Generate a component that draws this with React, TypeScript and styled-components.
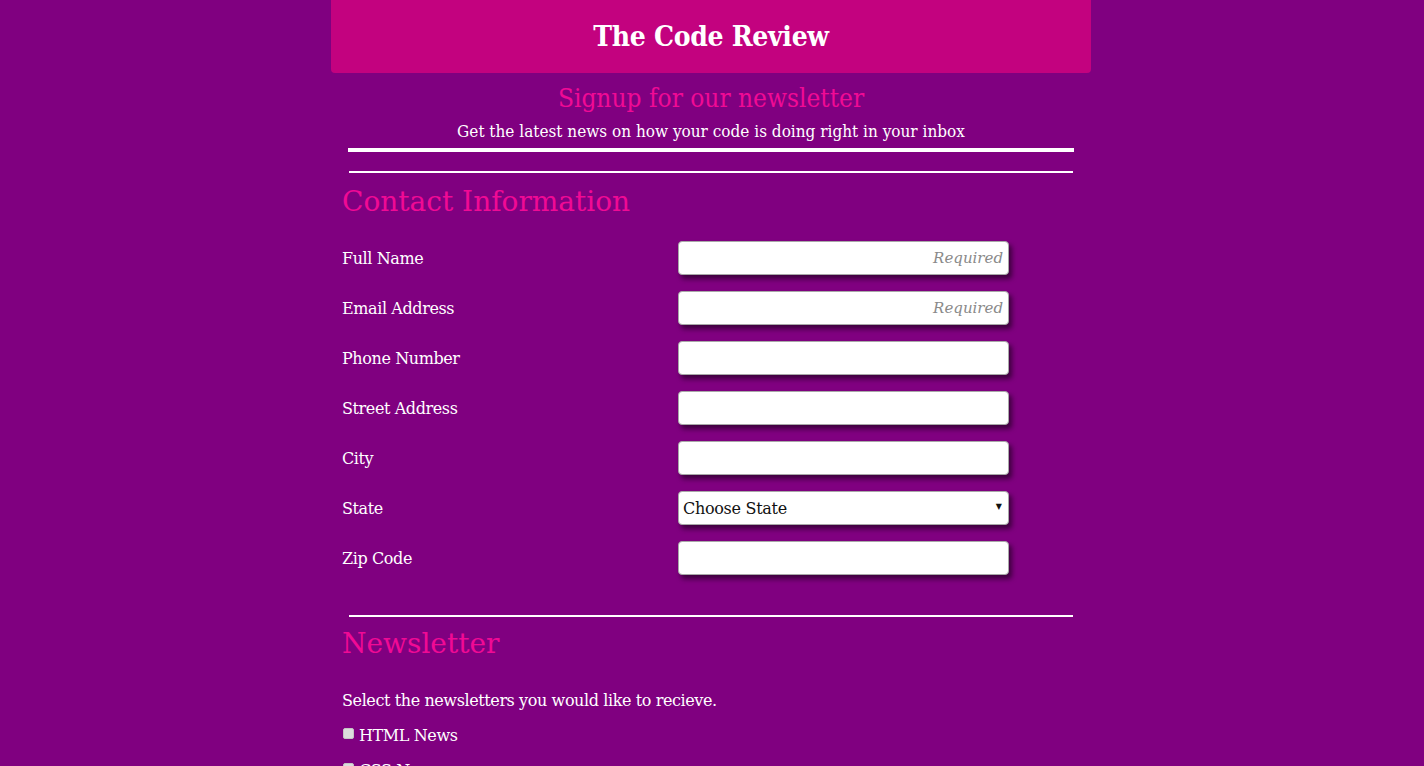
import React from 'react';
import styled, { createGlobalStyle } from 'styled-components';

const GlobalStyle = createGlobalStyle`
  body {
    margin: 0;
    background: #800080;
    font-family: 'DejaVu Serif', 'Liberation Serif', serif;
    color: #ffffff;
  }
`;

const fields = [
  { label: 'Full Name', required: true },
  { label: 'Email Address', required: true },
  { label: 'Phone Number' },
  { label: 'Street Address' },
  { label: 'City' },
  { label: 'State', select: true },
  { label: 'Zip Code' },
];

const App = () => {
  return (
    <>
      <GlobalStyle />
      <Page>
        <Header>
          <Title>The Code Review</Title>
        </Header>
        <Intro>
          <Signup>Signup for our newsletter</Signup>
          <Tagline>Get the latest news on how your code is doing right in your inbox</Tagline>
        </Intro>
        <ThickRule />
        <Rule />
        <Section>
          <SectionTitle>Contact Information</SectionTitle>
          <FormGrid>
            {fields.map((f) => (
              <React.Fragment key={f.label}>
                <Label>{f.label}</Label>
                {f.select ? (
                  <SelectWrap>
                    <Select defaultValue="">
                      <option value="">Choose State</option>
                    </Select>
                    <Arrow>▼</Arrow>
                  </SelectWrap>
                ) : (
                  <Input placeholder={f.required ? 'Required' : ''} />
                )}
              </React.Fragment>
            ))}
          </FormGrid>
        </Section>
        <Rule />
        <Section>
          <SectionTitle $top={8}>Newsletter</SectionTitle>
          <Prompt>Select the newsletters you would like to recieve.</Prompt>
          <CheckRow>
            <Check type="checkbox" />
            HTML News
          </CheckRow>
          <CheckRow>
            <Check type="checkbox" />
            CSS News
          </CheckRow>
        </Section>
      </Page>
    </>
  );
};

const Page = styled.div`
  width: 760px;
  margin: 0 auto;
  transform: translateX(-1px);
`;
const Header = styled.header`
  background: #c3027f;
  border-radius: 0 0 4px 4px;
  height: 73px;
  display: flex;
  align-items: center;
  justify-content: center;
`;
const Title = styled.h1`
  margin: 0;
  font-family: 'DejaVu Serif Condensed', 'DejaVu Serif', serif;
  font-size: 28px;
  letter-spacing: -0.3px;
  font-weight: bold;
  color: #ffffff;
`;
const Intro = styled.div`
  display: flex;
  flex-direction: column;
  align-items: center;
  padding-top: 8px;
`;
const Signup = styled.h2`
  margin: 0;
  font-family: 'DejaVu Serif Condensed', 'DejaVu Serif', serif;
  font-size: 26px;
  font-weight: normal;
  color: #f00a95;
  line-height: 34px;
`;
const Tagline = styled.p`
  margin: 4px 0 0;
  font-family: 'DejaVu Serif Condensed', 'DejaVu Serif', serif;
  font-size: 17px;
  line-height: 24px;
`;
const ThickRule = styled.hr`
  margin: 5px 17px 0;
  border: none;
  height: 4px;
  background: #ffffff;
`;
const Rule = styled.hr`
  margin: 19px 18px 0;
  border: none;
  height: 2px;
  background: #ffffff;
`;
const Section = styled.section`
  padding: 0 11px;
`;
const SectionTitle = styled.h3<{ $top?: number }>`
  margin: ${(p) => p.$top ?? 10}px 0 0;
  font-size: 28px;
  font-weight: normal;
  line-height: 38px;
  color: #f00a95;
`;
const FormGrid = styled.div`
  display: grid;
  grid-template-columns: 336px 331px;
  row-gap: 16px;
  align-items: center;
  margin: 20px 0 40px;
`;
const Label = styled.label`
  font-size: 16px;
  letter-spacing: -0.4px;
`;
const fieldBase = `
  box-sizing: border-box;
  height: 34px;
  width: 331px;
  border: 1px solid #a8a8a8;
  border-radius: 4px;
  background: #ffffff;
  box-shadow: 3px 4px 5px rgba(40, 0, 40, 0.75);
  font-family: 'DejaVu Serif', serif;
  font-size: 15px;
`;
const Input = styled.input`
  ${fieldBase}
  text-align: right;
  padding: 0 5px;
  &::placeholder {
    color: #8a8a8a;
    font-style: italic;
  }
`;
const SelectWrap = styled.div`
  position: relative;
  width: 331px;
`;
const Select = styled.select`
  ${fieldBase}
  appearance: none;
  color: #111111;
  padding: 0 4px;
  font-size: 16px;
  letter-spacing: -0.3px;
`;
const Arrow = styled.span`
  position: absolute;
  right: 7px;
  top: 11px;
  font-size: 8px;
  color: #111111;
  pointer-events: none;
`;
const Prompt = styled.p`
  margin: 28px 0 0;
  font-size: 16px;
  letter-spacing: -0.4px;
`;
const CheckRow = styled.label`
  display: flex;
  align-items: center;
  gap: 5px;
  margin-top: 16px;
  font-size: 16px;
  letter-spacing: -0.4px;
`;
const Check = styled.input`
  appearance: none;
  margin: 0 0 4px 1px;
  width: 11px;
  height: 11px;
  background: #dcdcdc;
  border: 1px solid #c4c4c4;
  border-radius: 2px;
`;

export default App;
